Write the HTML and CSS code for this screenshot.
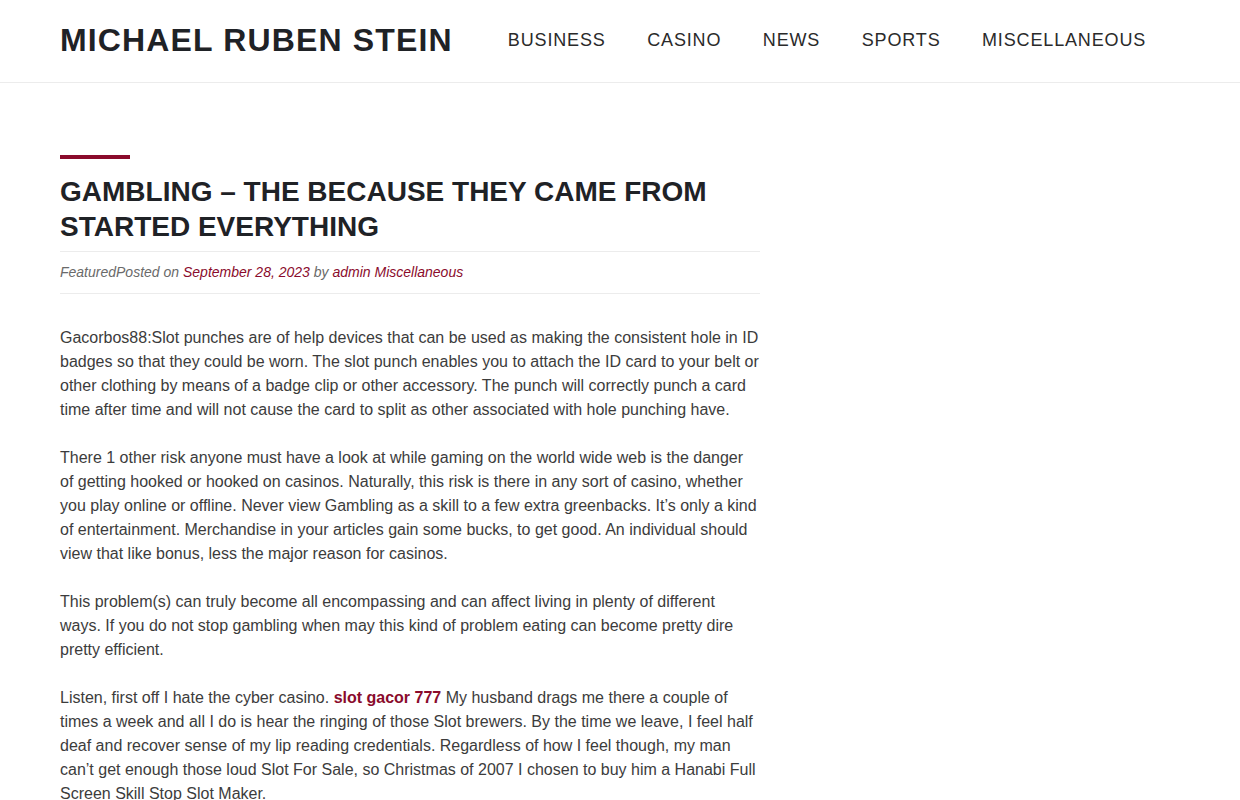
FILE: index.html
```html
<!DOCTYPE html>
<html lang="en">
<head>
<meta charset="utf-8">
<title>Michael Ruben Stein</title>
<link rel="stylesheet" href="styles.css">
</head>
<body>
<header class="site-header">
  <div class="site-title">MICHAEL RUBEN STEIN</div>
  <nav class="main-nav">
    <a href="#">Business</a>
    <a href="#">Casino</a>
    <a href="#">News</a>
    <a href="#">Sports</a>
    <a href="#">Miscellaneous</a>
  </nav>
</header>
<main class="content">
  <article class="post">
    <div class="accent-bar"></div>
    <h1 class="post-title">Gambling – The Because They Came From Started Everything</h1>
    <div class="post-meta">FeaturedPosted on <a href="#">September 28, 2023</a> by <a href="#">admin</a> <a href="#">Miscellaneous</a></div>
    <div class="post-body">
      <p>Gacorbos88:Slot punches are of help devices that can be used as making the consistent hole in ID badges so that they could be worn. The slot punch enables you to attach the ID card to your belt or other clothing by means of a badge clip or other accessory. The punch will correctly punch a card time after time and will not cause the card to split as other associated with hole punching have.</p>
      <p>There 1 other risk anyone must have a look at while gaming on the world wide web is the danger of getting hooked or hooked on casinos. Naturally, this risk is there in any sort of casino, whether you play online or offline. Never view Gambling as a skill to a few extra greenbacks. It’s only a kind of entertainment. Merchandise in your articles gain some bucks, to get good. An individual should view that like bonus, less the major reason for casinos.</p>
      <p>This problem(s) can truly become all encompassing and can affect living in plenty of different ways. If you do not stop gambling when may this kind of problem eating can become pretty dire pretty efficient.</p>
      <p>Listen, first off I hate the cyber casino. <a class="strong-link" href="#">slot gacor 777</a> My husband drags me there a couple of times a week and all I do is hear the ringing of those Slot brewers. By the time we leave, I feel half deaf and recover sense of my lip reading credentials. Regardless of how I feel though, my man can’t get enough those loud Slot For Sale, so Christmas of 2007 I chosen to buy him a Hanabi Full Screen Skill Stop Slot Maker.</p>
    </div>
  </article>
</main>
</body>
</html>
```

FILE: styles.css
```css
html, body {
  margin: 0;
  padding: 0;
  background: #fff;
}
body {
  font-family: "Liberation Sans", Arial, sans-serif;
  color: #3c3c3c;
}
a {
  text-decoration: none;
  color: #8a0b2c;
}
.site-header {
  height: 82px;
  border-bottom: 1px solid #ececec;
  display: flex;
  align-items: center;
  padding: 0 60px;
}
.site-title {
  font-size: 32px;
  font-weight: bold;
  letter-spacing: 1.15px;
  color: #1f2226;
  margin-right: 55px;
  position: relative;
  top: -1px;
}
.main-nav {
  display: flex;
  gap: 41.5px;
  position: relative;
  top: -1px;
}
.main-nav a {
  color: #2a2a2a;
  font-size: 18px;
  text-transform: uppercase;
  letter-spacing: 0.85px;
}
.content {
  width: 700px;
  margin-left: 60px;
  padding-top: 72px;
}
.accent-bar {
  width: 70px;
  height: 4px;
  background: #8a0a2b;
}
.post-title {
  margin: 15px 0 0;
  font-size: 28px;
  line-height: 35px;
  font-weight: bold;
  text-transform: uppercase;
  color: #1f2226;
  padding-bottom: 7px;
  border-bottom: 1px solid #ececec;
}
.post-meta {
  font-size: 14px;
  line-height: 21px;
  font-style: italic;
  color: #6a6a6a;
  padding: 10px 0;
  border-bottom: 1px solid #ececec;
}
.post-body {
  padding-top: 32px;
}
.post-body p {
  margin: 0 0 24px;
  font-size: 16px;
  line-height: 24px;
}
.strong-link {
  font-weight: bold;
}
```
